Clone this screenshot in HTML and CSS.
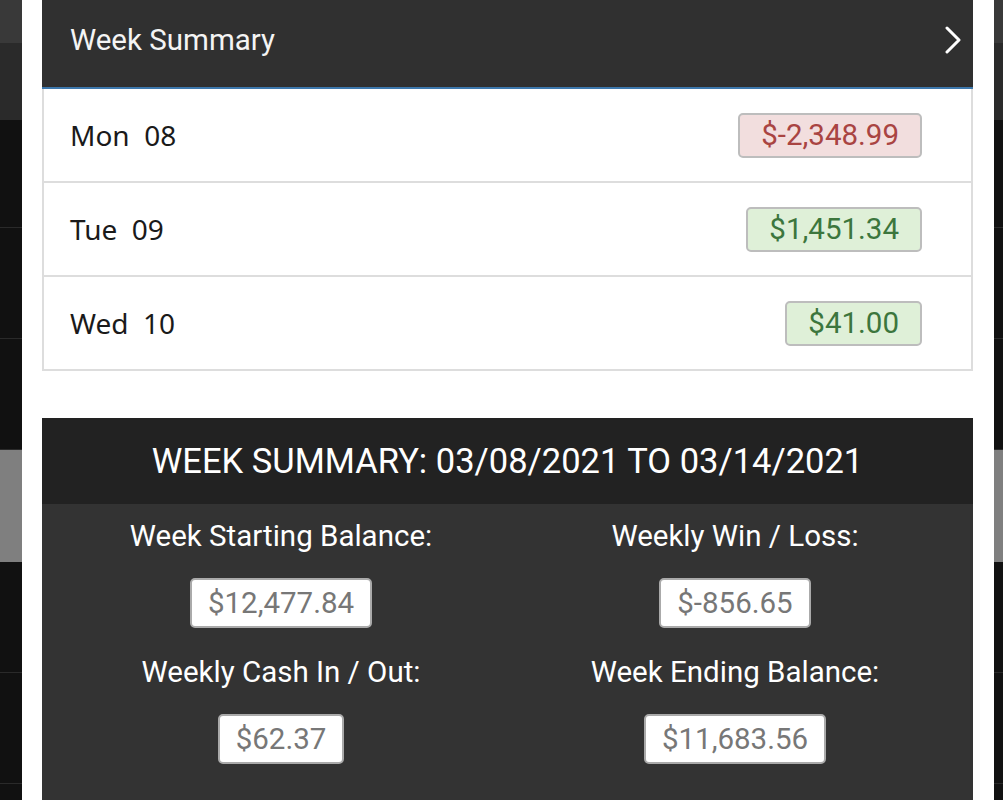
FILE: index.html
```html
<!doctype html>
<html>
  <head>
    <meta charset="utf-8">
    <title>Week Summary</title>
    <link rel="stylesheet" href="styles.css">
  </head>
  <body>
    <!-- page behind the modal -->
    <div class="backdrop">
      <div class="bd-topbar"></div>
      <div class="bd-nav"></div>
      <div class="bd-row"></div>
      <div class="bd-row"></div>
      <div class="bd-row"></div>
      <div class="bd-row bd-row-selected"></div>
      <div class="bd-row"></div>
      <div class="bd-row"></div>
      <div class="bd-row"></div>
    </div>

    <div class="modal">
      <header class="week-header">
        <h2>Week Summary</h2>
        <svg class="chevron" width="20" height="28" viewBox="0 0 20 28">
          <polyline points="4,2 16,14 4,26" fill="none" stroke="#fff" stroke-width="3" stroke-linecap="round" stroke-linejoin="round"/>
        </svg>
      </header>

      <ul class="day-list">
        <li class="day">
          <span class="day-name">Mon&nbsp;&nbsp;08</span>
          <span class="amount amount-loss">$-2,348.99</span>
        </li>
        <li class="day">
          <span class="day-name">Tue&nbsp;&nbsp;09</span>
          <span class="amount amount-win">$1,451.34</span>
        </li>
        <li class="day">
          <span class="day-name">Wed&nbsp;&nbsp;10</span>
          <span class="amount amount-win">$41.00</span>
        </li>
      </ul>

      <section class="summary">
        <h3 class="summary-title">WEEK SUMMARY: 03/08/2021 TO 03/14/2021</h3>
        <div class="summary-grid">
          <div class="stat">
            <div class="stat-label">Week Starting Balance:</div>
            <div class="stat-value">$12,477.84</div>
          </div>
          <div class="stat">
            <div class="stat-label">Weekly Win / Loss:</div>
            <div class="stat-value">$-856.65</div>
          </div>
          <div class="stat">
            <div class="stat-label">Weekly Cash In / Out:</div>
            <div class="stat-value">$62.37</div>
          </div>
          <div class="stat">
            <div class="stat-label">Week Ending Balance:</div>
            <div class="stat-value">$11,683.56</div>
          </div>
        </div>
      </section>
    </div>
  </body>
</html>
```

FILE: styles.css
```css
* {
  box-sizing: border-box;
}

html, body {
  height: 100%;
  margin: 0;
  overflow: hidden;
}

body {
  background: #111;
  font-family: Roboto, 'Noto Sans', sans-serif;
  position: relative;
}

/* Page behind the modal */
.backdrop {
  display: flex;
  flex-direction: column;
  height: 100%;
}

.bd-topbar {
  flex: 0 0 43px;
  background: #393939;
}

.bd-nav {
  flex: 0 0 77px;
  background: #2a2a2a;
}

.bd-row {
  flex: 0 0 111px;
  background: #111;
  border-bottom: 1px solid #2a2a2a;
}

.bd-row:nth-child(3) {
  flex-basis: 108px;
}

.bd-row-selected {
  background: #7f7f7f;
  border-bottom: 0;
  flex-basis: 112px;
}

/* Modal */
.modal {
  position: absolute;
  top: 0;
  bottom: 0;
  left: 22px;
  right: 9px;
  background: #fff;
  padding: 0 21px 0 20px;
}

.week-header {
  display: flex;
  align-items: center;
  justify-content: space-between;
  height: 89px;
  padding: 0 10px 7px 28px;
  background: #303030;
  border-bottom: 2px solid #3d78ad;
}

.week-header h2 {
  margin: 0;
  color: #f4f4f4;
  font-size: 29.5px;
  font-weight: normal;
}

.chevron {
  display: block;
}

.day-list {
  list-style: none;
  margin: 0;
  padding: 0;
  border: 2px solid #ddd;
  border-top: 0;
}

.day {
  display: flex;
  align-items: center;
  justify-content: space-between;
  height: 94px;
  padding: 0 49px 0 26px;
  border-bottom: 2px solid #ddd;
}

.day:last-child {
  border-bottom: 0;
  height: 92px;
}

.day-name {
  font-family: 'Noto Sans', sans-serif;
  font-size: 28px;
  color: #1a1a1a;
}

.amount {
  font-size: 29.5px;
  line-height: 33px;
  padding: 4px 21px;
  border: 2px solid #bdbdbd;
  border-radius: 5px;
}

.amount-loss {
  background: #f2dede;
  color: #a94442;
}

.amount-win {
  background: #dff0d8;
  color: #3c763d;
}

/* Week totals */
.summary {
  margin-top: 47px;
  background: #333;
  height: 400px;
}

.summary-title {
  margin: 0;
  height: 86px;
  display: flex;
  align-items: center;
  justify-content: center;
  background: #222;
  color: #fff;
  font-size: 34.5px;
  font-weight: normal;
}

.summary-grid {
  display: grid;
  grid-template-columns: 1fr 1fr;
  padding: 15px 11px 0 12px;
}

.stat {
  display: flex;
  flex-direction: column;
  align-items: center;
  padding-bottom: 27px;
}

.stat-label {
  color: #fff;
  font-size: 29.5px;
  line-height: 34px;
  margin-bottom: 25px;
}

.stat-value {
  background: #fff;
  color: #777;
  font-size: 29.5px;
  line-height: 34px;
  padding: 6px 16px;
  border: 2px solid #aaa;
  border-radius: 5px;
}
```
